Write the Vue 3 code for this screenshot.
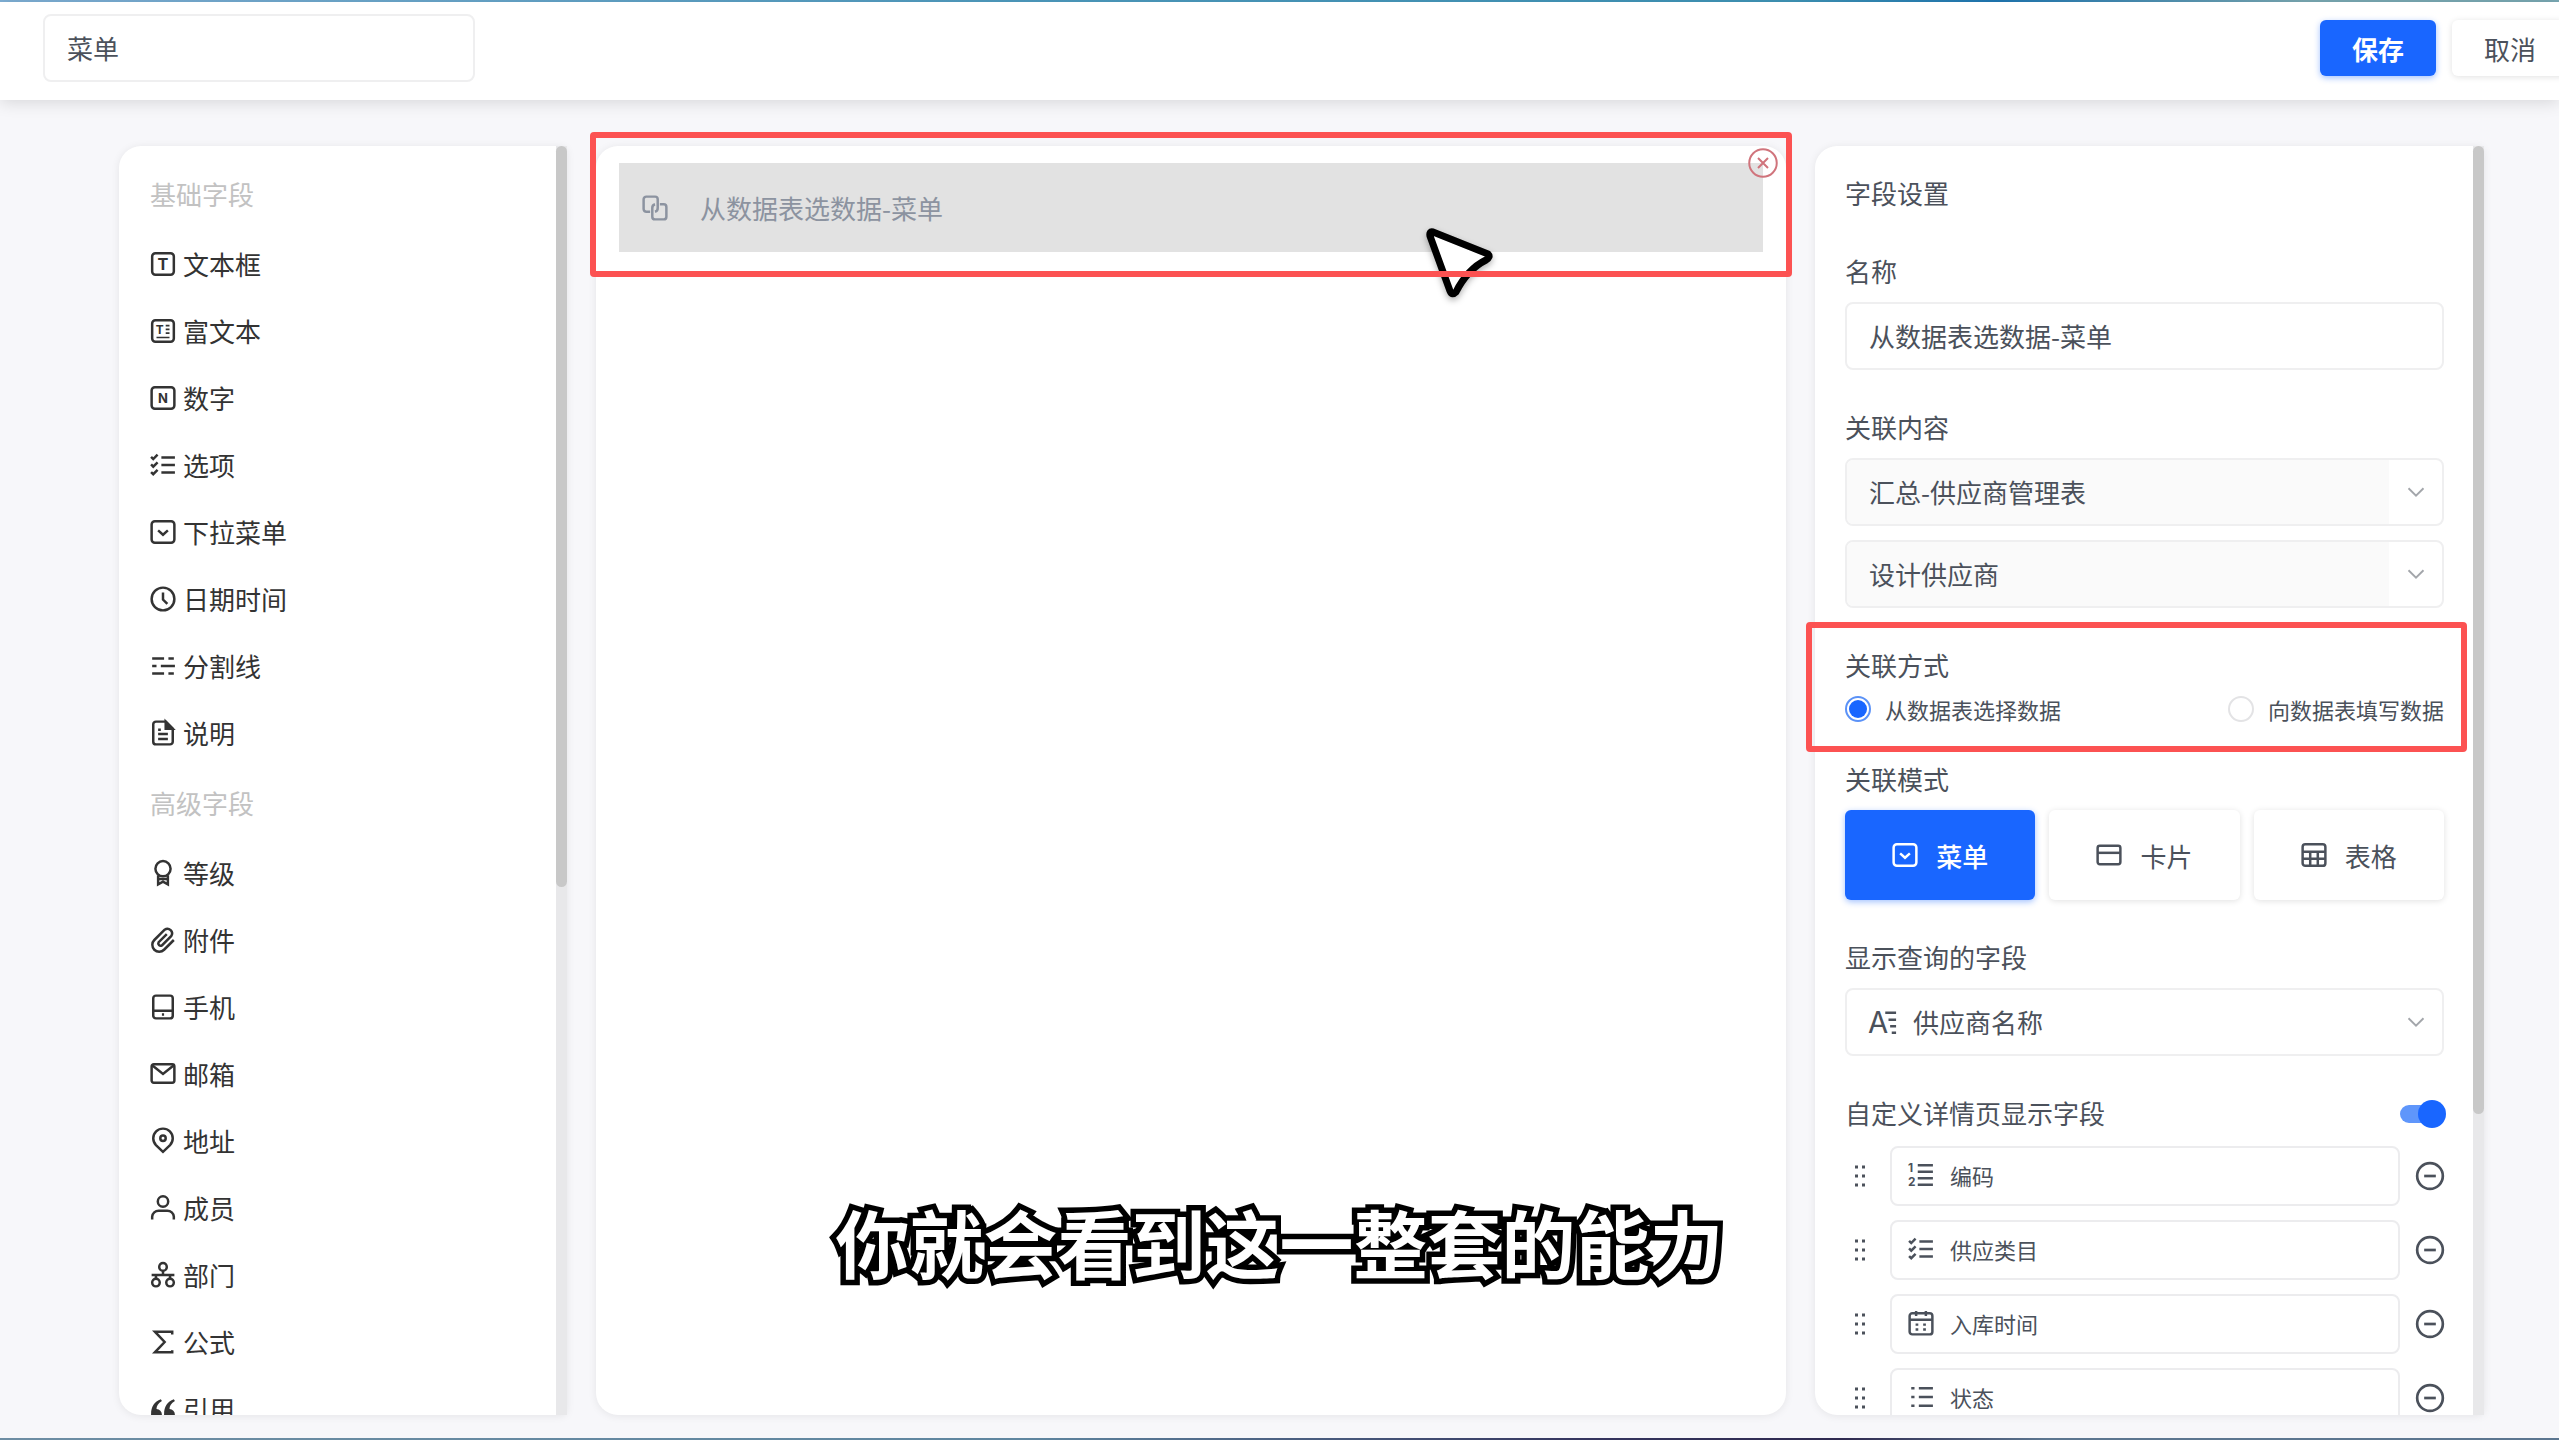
<script setup>
import { ref } from "vue";

const icons = {
  text: '<rect x="2" y="2" width="20" height="20" rx="3"/><text x="12" y="17.5" text-anchor="middle" font-size="15" font-weight="700" font-family="Inter, sans-serif" fill="currentColor" stroke="none">T</text>',
  rich: '<rect x="2" y="2" width="20" height="20" rx="3"/><text x="9" y="14.5" text-anchor="middle" font-size="11" font-weight="700" font-family="Inter, sans-serif" fill="currentColor" stroke="none">T</text><path d="M14.500 7H18M14.500 10.500H18M14.500 14H18M6 18H18" stroke-width="1.500"/>',
  number:
    '<rect x="1.500" y="2" width="21" height="20" rx="3"/><text x="12" y="16.500" text-anchor="middle" font-size="12" font-weight="700" font-family="Inter, sans-serif" fill="currentColor" stroke="none">N</text>',
  checks:
    '<path d="M10.500 5H23M10.500 12H23M10.500 19H23M1 4.500L3 6.500L7 2.500M1 11.500L3 13.500L7 9.500M1 18.500L3 20.500L7 16.500"/>',
  dropdown: '<rect x="1.500" y="2" width="21" height="20" rx="3"/><path d="M7.500 10.500L12 14.500L16.500 10.500"/>',
  clock: '<circle cx="12" cy="12" r="10.500"/><path d="M12 6V12.500L16 16.500"/>',
  divider: '<path d="M2 5H13M17 5H22M2 12H6M10 12H23M2 19H13M17 19H22"/>',
  doc: '<path d="M14.500 1.500H5.500A2.500 2.500 0 0 0 3 4V20A2.500 2.500 0 0 0 5.500 22.500H18.500A2.500 2.500 0 0 0 21 20V8Z"/><path d="M14.500 1.500V8H21Z" fill="currentColor"/><path d="M7.500 9H10M7.500 13H16.500M7.500 17.500H16.500"/>',
  medal: '<circle cx="12" cy="8" r="7"/><path d="M7.500 14V22.500L12 20L16.500 22.500V14M7.500 17.500H16.500"/>',
  clip: '<path d="M15.500 6.500L8 14A2.200 2.200 0 0 0 11 17L19.500 8.500A4.300 4.300 0 0 0 13.500 2.500L4 12A6.300 6.300 0 0 0 13 21L22 12"/>',
  phone: '<rect x="3" y="1.500" width="18" height="21" rx="2.500"/><path d="M3 15.500H21M11 19H13"/>',
  mail: '<rect x="1.500" y="3" width="21" height="17" rx="2"/><path d="M2 4L12 12L22 4"/>',
  pin: '<path d="M12 22L5.500 15.800A9 9 0 1 1 18.500 15.800Z"/><circle cx="12" cy="9.500" r="2.500"/>',
  user: '<circle cx="12" cy="6" r="4.800"/><path d="M2 22.500V20A6 6 0 0 1 8 14.500H16A6 6 0 0 1 22 20V22.500"/>',
  team: '<circle cx="12" cy="4.500" r="3.500"/><circle cx="5.500" cy="19" r="3.500"/><circle cx="18.500" cy="19" r="3.500"/><path d="M12 8V12M1.500 12H22.500M5.500 12V15.500M18.500 12V15.500"/>',
  sum: '<path d="M20.500 5V2.500H4.500L13.500 12L4.500 21.500H20.500V19.500"/>',
  quote:
    '<path d="M10 3C4 5 1 10 1 16.500A5 5 0 1 0 6 12C6 9 7.500 6.500 11 4.500ZM22 3C16 5 13 10 13 16.500A5 5 0 1 0 18 12C18 9 19.500 6.500 23 4.500Z" fill="currentColor" stroke="none"/>',
  link: '<path d="M7.500 15.500H4A2.500 2.500 0 0 1 1.500 13V4A2.500 2.500 0 0 1 4 1.500H12A2.500 2.500 0 0 1 14.500 4V12A3.500 3.500 0 0 1 12 15.500"/><path d="M16.500 8.500H20A2.500 2.500 0 0 1 22.500 11V20A2.500 2.500 0 0 1 20 22.500H12A2.500 2.500 0 0 1 9.500 20V12A3.500 3.500 0 0 1 12 8.500"/>',
  close: '<circle cx="12" cy="12" r="11"/><path d="M8 8L16 16M16 8L8 16"/>',
  chevron: '<path d="M3 7.500L12 16.500L21 7.500"/>',
  card: '<rect x="1.500" y="3.500" width="21" height="17" rx="2"/><path d="M1.500 10H22.500"/>',
  table: '<rect x="1.500" y="2" width="21" height="20" rx="2.500"/><path d="M1.500 9H22.500M1.500 15.500H22.500M8.500 9V22M15.500 9V22"/>',
  textLine:
    '<text x="-1" y="22" font-size="27" font-family="Inter, sans-serif" fill="currentColor" stroke="none">A</text><path d="M15 3.500H25M18 10H25M19.500 16H25M21 22H25"/>',
  ordered:
    '<text x="0" y="9" font-size="11" font-weight="700" font-family="Inter, sans-serif" fill="currentColor" stroke="none">1</text><text x="0" y="22" font-size="11" font-weight="700" font-family="Inter, sans-serif" fill="currentColor" stroke="none">2</text><path d="M9 3H23M9 9H23M9 15H23M9 21H23"/>',
  calendar:
    '<rect x="1.500" y="3" width="21" height="19.500" rx="2.500"/><path d="M1.500 9H22.500M7.500 1V5.500M16.500 1V5.500M7 13.500H9.500M14 13.500H16.500M7 18H9.500M14 18H16.500"/>',
  bullets: '<path d="M10 4H23M10 12H23M10 20H23M3 4H6M3 12H6M3 20H6"/>',
  minus: '<circle cx="12" cy="12" r="11"/><path d="M7 12H17"/>',
};

const groups = [
  {
    title: "基础字段",
    fields: [
      { name: "文本框", icon: "text" },
      { name: "富文本", icon: "rich" },
      { name: "数字", icon: "number" },
      { name: "选项", icon: "checks" },
      { name: "下拉菜单", icon: "dropdown" },
      { name: "日期时间", icon: "clock" },
      { name: "分割线", icon: "divider" },
      { name: "说明", icon: "doc" },
    ],
  },
  {
    title: "高级字段",
    fields: [
      { name: "等级", icon: "medal" },
      { name: "附件", icon: "clip" },
      { name: "手机", icon: "phone" },
      { name: "邮箱", icon: "mail" },
      { name: "地址", icon: "pin" },
      { name: "成员", icon: "user" },
      { name: "部门", icon: "team" },
      { name: "公式", icon: "sum" },
      { name: "引用", icon: "quote" },
    ],
  },
];

const modes = [
  { name: "菜单", icon: "dropdown" },
  { name: "卡片", icon: "card" },
  { name: "表格", icon: "table" },
];

const details = ref([
  { name: "编码", icon: "ordered" },
  { name: "供应类目", icon: "checks" },
  { name: "入库时间", icon: "calendar" },
  { name: "状态", icon: "bullets" },
]);

const formName = ref("菜单");
const fieldName = ref("从数据表选数据-菜单");
const relation = ref("select");
const activeMode = ref("菜单");
const showDetails = ref(true);

const removeDetail = (index) => {
  details.value.splice(index, 1);
};
</script>

<template>
  <div class="page">
    <header class="header">
      <input v-model="formName" class="input form-name" type="text" aria-label="表单名称" />
      <div class="actions">
        <button class="btn primary">保存</button>
        <button class="btn">取消</button>
      </div>
    </header>

    <main class="main">
      <aside class="panel side">
        <div class="scroll">
          <section v-for="group in groups" :key="group.title">
            <h3 class="group-title">{{ group.title }}</h3>
            <button v-for="field in group.fields" :key="field.name" class="field">
              <svg class="icon" viewBox="0 0 24 24" v-html="icons[field.icon]"></svg>
              <span>{{ field.name }}</span>
            </button>
          </section>
        </div>
        <div class="track"><div class="thumb side-thumb"></div></div>
      </aside>

      <section class="panel canvas">
        <div class="canvas-item">
          <svg class="icon" viewBox="0 0 24 24" v-html="icons.link"></svg>
          <span>{{ fieldName }}</span>
          <button class="remove" aria-label="删除">
            <svg viewBox="0 0 24 24" v-html="icons.close"></svg>
          </button>
          <svg class="cursor" viewBox="0 0 70 76">
            <path d="M9 6L64 28Q67 31 62 34C50 40 40 50 32 66Q28 70 26 65L6 10Q5 5 9 6Z" />
          </svg>
          <div class="mark item-mark"></div>
        </div>
      </section>

      <aside class="panel settings">
        <div class="scroll">
          <h2 class="label">字段设置</h2>

          <div class="group">
            <label class="label" for="field-name">名称</label>
            <input id="field-name" v-model="fieldName" class="input" type="text" />
          </div>

          <div class="group">
            <label class="label" for="source">关联内容</label>
            <div class="select filled">
              <select id="source">
                <option>汇总-供应商管理表</option>
              </select>
              <svg class="chevron" viewBox="0 0 24 24" v-html="icons.chevron"></svg>
            </div>
            <div class="select filled">
              <select aria-label="数据表">
                <option>设计供应商</option>
              </select>
              <svg class="chevron" viewBox="0 0 24 24" v-html="icons.chevron"></svg>
            </div>
          </div>

          <div class="group">
            <div class="label">关联方式</div>
            <div class="radios">
              <label>
                <input v-model="relation" type="radio" name="relation" value="select" />
                从数据表选择数据
              </label>
              <label>
                <input v-model="relation" type="radio" name="relation" value="fill" />
                向数据表填写数据
              </label>
            </div>
          </div>

          <div class="group">
            <div class="label">关联模式</div>
            <div class="modes">
              <button
                v-for="mode in modes"
                :key="mode.name"
                class="btn mode"
                :class="{ primary: mode.name === activeMode }"
                @click="activeMode = mode.name"
              >
                <svg class="icon" viewBox="0 0 24 24" v-html="icons[mode.icon]"></svg>
                <span>{{ mode.name }}</span>
              </button>
            </div>
          </div>

          <div class="group">
            <label class="label" for="display-field">显示查询的字段</label>
            <div class="select with-icon">
              <svg class="icon" viewBox="0 0 24 24" v-html="icons.textLine"></svg>
              <select id="display-field">
                <option>供应商名称</option>
              </select>
              <svg class="chevron" viewBox="0 0 24 24" v-html="icons.chevron"></svg>
            </div>
          </div>

          <div class="group">
            <div class="switch-row">
              <label class="label" for="show-details">自定义详情页显示字段</label>
              <input id="show-details" v-model="showDetails" class="switch" type="checkbox" />
            </div>
            <ul v-if="showDetails" class="details">
              <li v-for="(item, index) in details" :key="item.name">
                <svg class="drag" viewBox="0 0 12 24">
                  <path d="M1 3H4M8 3H11M1 12H4M8 12H11M1 21H4M8 21H11" />
                </svg>
                <div class="detail">
                  <svg class="icon" viewBox="0 0 24 24" v-html="icons[item.icon]"></svg>
                  <span>{{ item.name }}</span>
                </div>
                <button class="minus" aria-label="移除" @click="removeDetail(index)">
                  <svg viewBox="0 0 24 24" v-html="icons.minus"></svg>
                </button>
              </li>
            </ul>
          </div>
        </div>
        <div class="track"><div class="thumb settings-thumb"></div></div>
        <div class="mark relation-mark"></div>
      </aside>
    </main>

    <p class="subtitle">你就会看到这一整套的能力</p>
  </div>
</template>

<style>
body {
  margin: 0;
  overflow: hidden;
}
</style>

<style scoped>
* {
  box-sizing: border-box;
}

.page {
  position: relative;
  display: flex;
  flex-direction: column;
  height: 100vh;
  overflow: hidden;
  background-color: #f7f7fa;
  color: #4b515b;
  font-family: "Noto Sans CJK SC", sans-serif;
  font-size: 26px;
}

.page::before,
.page::after {
  content: "";
  flex: none;
  height: 2px;
  background: linear-gradient(90deg, #7fb0d6, #4e9cc0 40%, #3f95b8 70%, #1f78b4 78%, #7aa9b4 90%);
}

.page::after {
  background: linear-gradient(90deg, #6d8da3, #5f86a0 40%, #35355f 62%, #2f2a50 72%, #5c7690 80%);
}

button,
input,
select {
  font: inherit;
  color: inherit;
}

button {
  padding: 0;
  border: none;
  background: none;
  cursor: pointer;
}

svg {
  flex: none;
  fill: none;
  stroke: currentColor;
  stroke-width: 2.3;
  overflow: visible;
}

.icon {
  width: 26px;
  height: 26px;
}

.input {
  display: block;
  width: 100%;
  height: 68px;
  padding: 0 22px 2px;
  border: 2px solid #efeff0;
  border-radius: 8px;
  background-color: #fff;
  outline: none;
}

.header {
  display: flex;
  flex: none;
  justify-content: space-between;
  align-items: center;
  height: 98px;
  padding-left: 43px;
  background-color: #fff;
  box-shadow: 0 2px 16px rgba(0, 0, 0, 0.14);
  z-index: 1;
}

.form-name {
  width: 432px;
  margin-bottom: 6px;
}

.actions {
  display: flex;
  gap: 16px;
  margin-right: -9px;
  margin-bottom: 6px;
}

.btn {
  width: 116px;
  height: 56px;
  border-radius: 6px;
  background-color: #fff;
  box-shadow: 0 1px 6px rgba(0, 0, 0, 0.12);
}

.btn.primary {
  background-color: #1966ff;
  box-shadow: 0 2px 6px rgba(25, 102, 255, 0.4);
  color: #fff;
  font-weight: 500;
}

.actions .primary {
  font-weight: 700;
}

.main {
  display: grid;
  flex: 1;
  grid-template-columns: 448px minmax(0, 1fr) 669px;
  gap: 29px;
  min-height: 0;
  padding: 46px 75px 23px 119px;
}

.panel {
  position: relative;
  display: flex;
  min-height: 0;
  border-radius: 22px;
  background-color: #fff;
  box-shadow: 0 1px 8px rgba(0, 0, 0, 0.08);
}

.side,
.settings {
  border-radius: 22px 6px 6px 22px;
}

.scroll {
  flex: 1;
  min-width: 0;
  overflow: hidden;
}

.track {
  width: 11px;
  background-color: #e8e8ea;
}

.thumb {
  border-radius: 6px;
  background-color: #c8c8c8;
}

.side-thumb {
  height: 58.4%;
}

.settings-thumb {
  height: 76.3%;
}

.side .scroll {
  padding: 11px 31px 0;
}

.group-title {
  margin: 0;
  color: #c2c2c2;
  font-size: 26px;
  font-weight: 400;
  line-height: 73px;
}

.field {
  display: flex;
  align-items: center;
  gap: 7px;
  width: 100%;
  height: 67px;
  color: #333;
}

.canvas {
  display: block;
  padding: 17px 23px;
}

.canvas-item {
  position: relative;
  display: flex;
  align-items: center;
  gap: 32px;
  height: 89px;
  padding: 0 23px;
  background-color: #e2e2e2;
  color: #8c93a0;
}

.remove {
  position: absolute;
  top: -15px;
  right: -15px;
  width: 30px;
  height: 30px;
  color: #d0747c;
}

.remove svg {
  display: block;
  width: 30px;
  height: 30px;
  stroke-width: 1.6;
}

.cursor {
  position: absolute;
  top: 63px;
  right: 269px;
  width: 70px;
  height: 76px;
  fill: #fff;
  stroke: #000;
  stroke-width: 7;
  stroke-linejoin: round;
  filter: drop-shadow(0 3px 3px rgba(0, 0, 0, 0.3));
}

.mark {
  position: absolute;
  border: 6px solid #fc5252;
  border-radius: 4px;
  pointer-events: none;
}

.item-mark {
  inset: -31px -29px -25px -29px;
}

.relation-mark {
  top: 476px;
  right: 17px;
  left: -9px;
  height: 130px;
}

.settings .scroll {
  padding: 28px 29px 0 30px;
}

.label {
  display: block;
  margin: 0;
  padding-bottom: 2px;
  font-size: 26px;
  font-weight: 400;
  line-height: 38px;
}

.group {
  display: flex;
  flex-direction: column;
  gap: 10px;
  margin-top: 38px;
}

.select {
  display: flex;
  align-items: center;
  height: 68px;
  padding-right: 16px;
  border: 2px solid #efeff0;
  border-radius: 8px;
  overflow: hidden;
}

.select + .select {
  margin-top: 4px;
}

.select select {
  flex: 1;
  height: 100%;
  padding: 0 22px 2px;
  border: none;
  background-color: transparent;
  appearance: none;
  outline: none;
}

.select.filled select {
  background-color: #fafafa;
}

.select.with-icon {
  padding-left: 22px;
}

.select.with-icon select {
  padding-left: 18px;
}

.chevron {
  width: 20px;
  height: 20px;
  margin-left: 17px;
  color: #a3a6ab;
}

.radios {
  display: flex;
  justify-content: space-between;
  font-size: 22px;
  line-height: 26px;
}

.radios label {
  display: flex;
  align-items: center;
  gap: 14px;
}

.radios input {
  width: 26px;
  height: 26px;
  margin: 0;
  border: 2px solid #e3e3e5;
  border-radius: 50%;
  appearance: none;
}

.radios input:checked {
  padding: 2px;
  border-color: #5b92f7;
  background: #1966ff content-box;
}

.modes {
  display: grid;
  grid-template-columns: repeat(3, 1fr);
  gap: 14px;
}

.mode {
  display: flex;
  justify-content: center;
  align-items: center;
  gap: 18px;
  width: auto;
  height: 90px;
}

.switch-row {
  display: flex;
  justify-content: space-between;
  align-items: center;
}

.switch {
  position: relative;
  width: 44px;
  height: 18px;
  margin: 0;
  border-radius: 9px;
  background-color: #5f96fb;
  appearance: none;
}

.switch::before {
  content: "";
  position: absolute;
  top: -5px;
  right: -2px;
  width: 28px;
  height: 28px;
  border-radius: 50%;
  background-color: #1966ff;
}

.details {
  display: flex;
  flex-direction: column;
  gap: 14px;
  margin: 2px 0 0;
  padding: 0;
  font-size: 22px;
  list-style: none;
}

.details li {
  display: flex;
  align-items: center;
  padding-left: 9px;
}

.drag {
  width: 12px;
  height: 24px;
  margin-right: 24px;
  stroke-width: 3;
}

.detail {
  display: flex;
  flex: 1;
  align-items: center;
  gap: 16px;
  height: 60px;
  padding: 0 16px 2px;
  border: 2px solid #ececee;
  border-radius: 8px;
}

.minus {
  width: 28px;
  height: 28px;
  margin-left: 16px;
}

.minus svg {
  display: block;
  width: 28px;
  height: 28px;
}

.subtitle {
  position: absolute;
  right: 0;
  bottom: 144px;
  left: 0;
  margin: 0;
  color: #fff;
  font-size: 74px;
  font-weight: 700;
  line-height: 110px;
  text-align: center;
  pointer-events: none;
  -webkit-text-stroke: 11px #000;
  paint-order: stroke fill;
  stroke-linejoin: round;
}
</style>
